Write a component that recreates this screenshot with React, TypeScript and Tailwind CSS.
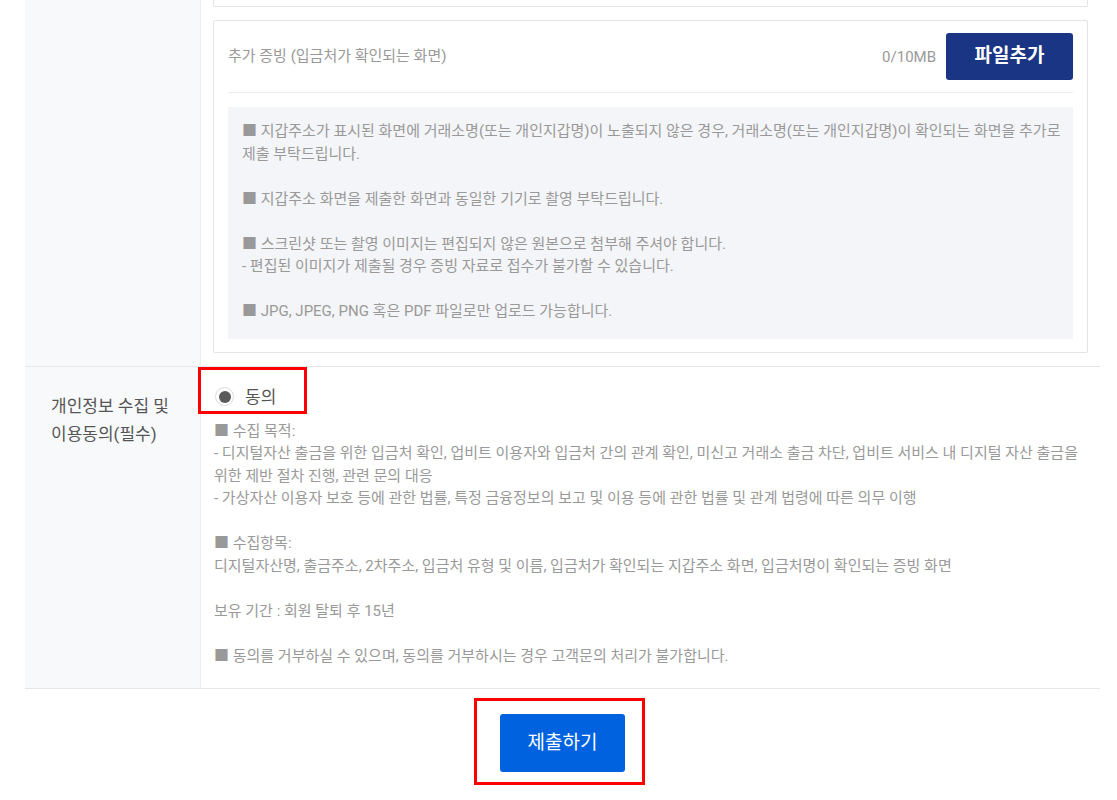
import React from "react";

const font = { fontFamily: "Roboto, 'Noto Sans CJK KR', 'Noto Sans', sans-serif" };

export default function App() {
  return (
    <div className="w-[1117px] h-[800px] bg-white overflow-hidden" style={font}>
      <div className="ml-[25px] w-[1075px]">
        {/* Row 1 */}
        <div className="flex border-b border-[#e6e7ea]">
          <div className="w-[176px] shrink-0 bg-[#f8f9fb] border-r border-[#eceef1]" />
          <div className="flex-1 pl-[12px] pr-[12px] pb-[13px]">
            <div className="h-[7px] border-x border-b border-[#e3e4e6] rounded-b-[2px]" />
            <div className="mt-[13px] border border-[#e3e4e6] rounded-[2px] px-[14px] pb-[13px]">
              <div className="flex items-center justify-between pt-[12px] pb-[12px] border-b border-[#ececee]">
                <span className="text-[15px] text-[#999] leading-[20px] -mt-[1px]">추가 증빙 (입금처가 확인되는 화면)</span>
                <div className="flex items-center">
                  <span className="text-[15px] text-[#999] mr-[10px] mt-[2px]">0/10MB</span>
                  <button className="w-[127px] h-[47px] bg-[#1b3585] rounded-[3px] text-white text-[19px] font-bold">파일추가</button>
                </div>
              </div>
              <div className="mt-[14px] bg-[#f4f5f8] pl-[14px] pr-[6px] pt-[13px] pb-[16px] text-[15px] leading-[22.5px] text-[#999] break-keep">
                <p>■ 지갑주소가 표시된 화면에 거래소명(또는 개인지갑명)이 노출되지 않은 경우, 거래소명(또는 개인지갑명)이 확인되는 화면을 추가로 제출 부탁드립니다.</p>
                <p>&nbsp;</p>
                <p>■ 지갑주소 화면을 제출한 화면과 동일한 기기로 촬영 부탁드립니다.</p>
                <p>&nbsp;</p>
                <p>■ 스크린샷 또는 촬영 이미지는 편집되지 않은 원본으로 첨부해 주셔야 합니다.</p>
                <p>- 편집된 이미지가 제출될 경우 증빙 자료로 접수가 불가할 수 있습니다.</p>
                <p>&nbsp;</p>
                <p>■ JPG, JPEG, PNG 혹은 PDF 파일로만 업로드 가능합니다.</p>
              </div>
            </div>
          </div>
        </div>

        {/* Row 2 */}
        <div className="flex border-b border-[#e6e7ea]">
          <div className="w-[176px] shrink-0 bg-[#f8f9fb] border-r border-[#eceef1] pl-[26px] pt-[25px] text-[17px] leading-[28px] text-[#555]">
            <p>개인정보 수집 및</p>
            <p>이용동의(필수)</p>
          </div>
          <div className="flex-1 pl-[13px] pr-[12px] pt-[18px] pb-[21px]">
            <div className="relative h-[24px] flex items-center">
              <div className="absolute left-[-16px] top-[-18px] w-[109px] h-[47px] border-[3px] border-[#ff0000]" />
              <span className="w-[19px] h-[19px] ml-[1px] rounded-full border border-[#dcdcdc] bg-white flex items-center justify-center">
                <span className="w-[12px] h-[12px] rounded-full bg-[#5a5a5a]" />
              </span>
              <span className="ml-[11px] text-[17px] text-[#555] leading-[24px]">동의</span>
            </div>
            <div className="mt-[11px] text-[15px] leading-[22.5px] text-[#999] break-keep">
              <p>■ 수집 목적:</p>
              <p>- 디지털자산 출금을 위한 입금처 확인, 업비트 이용자와 입금처 간의 관계 확인, 미신고 거래소 출금 차단, 업비트 서비스 내 디지털 자산 출금을 위한 제반 절차 진행, 관련 문의 대응</p>
              <p>- 가상자산 이용자 보호 등에 관한 법률, 특정 금융정보의 보고 및 이용 등에 관한 법률 및 관계 법령에 따른 의무 이행</p>
              <p>&nbsp;</p>
              <p>■ 수집항목:</p>
              <p>디지털자산명, 출금주소, 2차주소, 입금처 유형 및 이름, 입금처가 확인되는 지갑주소 화면, 입금처명이 확인되는 증빙 화면</p>
              <p>&nbsp;</p>
              <p>보유 기간 : 회원 탈퇴 후 15년</p>
              <p>&nbsp;</p>
              <p>■ 동의를 거부하실 수 있으며, 동의를 거부하시는 경우 고객문의 처리가 불가합니다.</p>
            </div>
          </div>
        </div>

        {/* Submit */}
        <div className="flex justify-center pt-[25px]">
          <div className="relative">
            <div className="absolute left-[-26px] top-[-16px] w-[171px] h-[87px] border-[3px] border-[#ff0000]" />
            <button className="w-[125px] h-[58px] bg-[#0062df] rounded-[3px] text-white text-[19px]">제출하기</button>
          </div>
        </div>
      </div>
    </div>
  );
}
